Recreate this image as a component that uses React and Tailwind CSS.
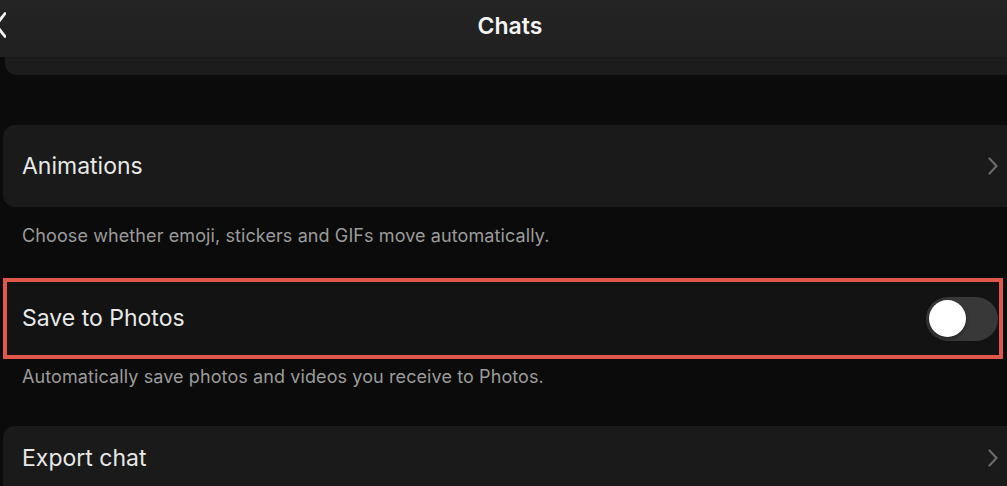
function Chevron() {
  return (
    <svg width="10" height="18" viewBox="0 0 10 18" fill="none" className="shrink-0">
      <path d="M1.5 1.5 8.5 9l-7 7.5" stroke="#6a6a6a" strokeWidth="2.2" strokeLinecap="round" strokeLinejoin="round" />
    </svg>
  );
}

function Row({ label, className = 'items-center', children }) {
  return (
    <div className={`ml-[3px] flex h-[82px] justify-between rounded-l-[12px] bg-[#1a1a1a] pl-[19px] pr-[9px] ${className}`}>
      <span className="text-[23px] leading-[28px] text-[#e8e8e8]">{label}</span>
      {children}
    </div>
  );
}

function Caption({ children }) {
  return <p className="pl-[22px] text-[18px] leading-[22px] tracking-[0.1px] text-[#9b9b9b]">{children}</p>;
}

export default function App() {
  return (
    <div className="h-[486px] w-[1007px] overflow-hidden bg-[#0b0b0b] font-['Inter',sans-serif]">
      <div className="relative flex h-[57px] items-center justify-center bg-gradient-to-b from-[#242424] to-[#202020] pl-[13px]">
        <svg width="12" height="26" viewBox="0 0 12 26" fill="none" className="absolute left-[-6px] top-[12px]">
          <path d="M11 1.5 2 13l9 11.5" stroke="#f2f2f2" strokeWidth="2.8" strokeLinecap="round" strokeLinejoin="round" />
        </svg>
        <h1 className="-mt-[5px] text-[23px] font-semibold text-[#f4f4f4]">Chats</h1>
      </div>
      <div className="ml-[5px] h-[18px] rounded-bl-[12px] bg-[#1c1c1c]" />

      <div className="mt-[50px]">
        <Row label="Animations">
          <Chevron />
        </Row>
      </div>
      <div className="mt-[18px]">
        <Caption>Choose whether emoji, stickers and GIFs move automatically.</Caption>
      </div>

      <div className="ml-[3px] mt-[31px] flex h-[81px] w-[1000px] items-center justify-between border-[4px] border-[#e0584c] bg-[#131313] pl-[15px] pr-[1px]">
        <span className="text-[23px] text-[#e8e8e8]">Save to Photos</span>
        <div className="flex h-[44px] w-[72px] items-center rounded-full bg-[#383838] pl-[3px]">
          <div className="h-[37px] w-[37px] rounded-full bg-white shadow-[0_2px_4px_rgba(0,0,0,0.4)]" />
        </div>
      </div>
      <div className="mt-[7px]">
        <Caption>Automatically save photos and videos you receive to Photos.</Caption>
      </div>

      <div className="mt-[38px]">
        <Row label="Export chat" className="items-start pt-[18px]">
          <div className="mt-[5px]">
            <Chevron />
          </div>
        </Row>
      </div>
    </div>
  );
}
